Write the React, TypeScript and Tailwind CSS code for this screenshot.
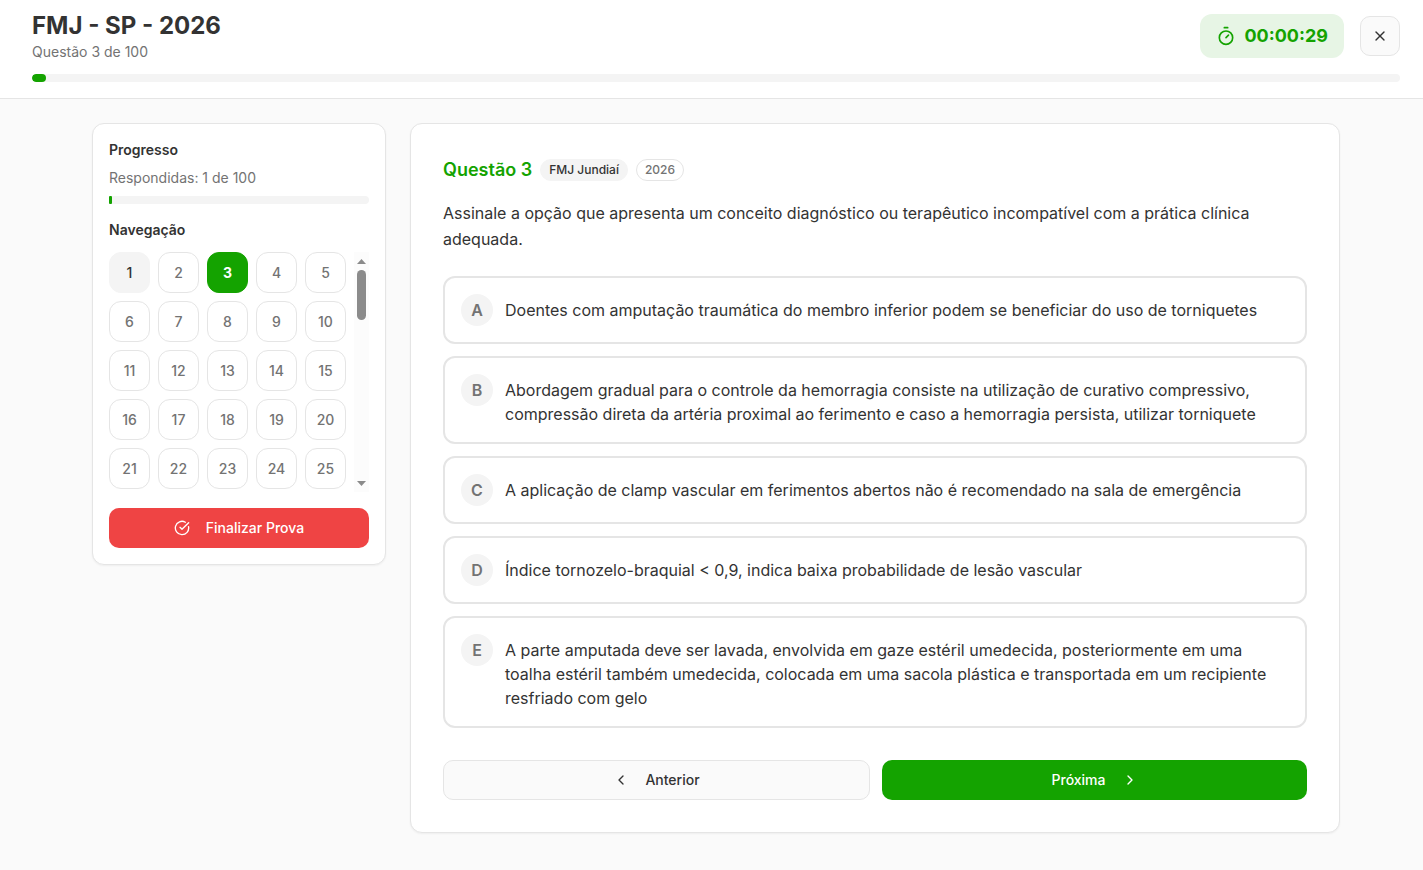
import { useState } from "react";
import { ChevronLeft, ChevronRight, CircleCheckBig, Timer, X } from "lucide-react";

const TOTAL = 100;
const CURRENT = 3;
const ANSWERED = [1];

const PER_ROW = 5;
const VISIBLE_ROWS = 5;
const LAST_ROW = TOTAL / PER_ROW - VISIBLE_ROWS;
const THUMB_TRAVEL = 155;

const options = [
  {
    letter: "A",
    text: "Doentes com amputação traumática do membro inferior podem se beneficiar do uso de torniquetes",
  },
  {
    letter: "B",
    text: "Abordagem gradual para o controle da hemorragia consiste na utilização de curativo compressivo, compressão direta da artéria proximal ao ferimento e caso a hemorragia persista, utilizar torniquete",
  },
  {
    letter: "C",
    text: "A aplicação de clamp vascular em ferimentos abertos não é recomendado na sala de emergência",
  },
  {
    letter: "D",
    text: "Índice tornozelo-braquial < 0,9, indica baixa probabilidade de lesão vascular",
  },
  {
    letter: "E",
    text: "A parte amputada deve ser lavada, envolvida em gaze estéril umedecida, posteriormente em uma toalha estéril também umedecida, colocada em uma sacola plástica e transportada em um recipiente resfriado com gelo",
  },
];

function navClass(n: number) {
  if (n === CURRENT) return "border-[#14a300] bg-[#14a300] text-white font-bold";
  if (ANSWERED.includes(n)) return "border-[#f4f4f4] bg-[#f4f4f4] text-[#333333] font-medium";
  return "border-[#e5e5e5] bg-white text-[#737373] font-medium";
}

function Header() {
  return (
    <header className="border-b border-[#e5e5e5] bg-white px-8 pt-[10px] pb-4">
      <div className="flex items-center justify-between">
        <div>
          <h1 className="text-2xl font-bold">FMJ - SP - 2026</h1>
          <p className="text-sm text-[#737373]">
            Questão {CURRENT} de {TOTAL}
          </p>
        </div>

        <div className="flex items-center gap-4">
          <div className="flex items-center gap-2 rounded-xl bg-[#e7f5e5] px-4 py-2 text-[#14a300]">
            <Timer className="h-5 w-5" />
            <span className="text-lg font-bold">00:00:29</span>
          </div>
          <button
            aria-label="Fechar"
            className="flex h-10 w-10 items-center justify-center rounded-[10px] border border-[#e5e5e5] bg-[#fafafa]"
          >
            <X className="h-4 w-4" />
          </button>
        </div>
      </div>

      <div className="mt-3 h-2 overflow-hidden rounded-full bg-[#f4f4f4]">
        <div className="h-full w-[1%] min-w-[14px] rounded-full bg-[#14a300]" />
      </div>
    </header>
  );
}

function Sidebar() {
  const [row, setRow] = useState(0);
  const first = row * PER_ROW + 1;

  return (
    <aside className="self-start rounded-xl border border-[#e5e5e5] bg-white p-4 shadow-xs">
      <h2 className="text-sm font-semibold">Progresso</h2>
      <p className="mt-2 text-sm text-[#737373]">
        Respondidas: {ANSWERED.length} de {TOTAL}
      </p>
      <div className="mt-2 h-2 rounded-full bg-[#f4f4f4]">
        <div
          className="h-full rounded-[1px] bg-[#14a300]"
          style={{ width: `${(ANSWERED.length / TOTAL) * 100}%` }}
        />
      </div>

      <h2 className="mt-4 text-sm font-semibold">Navegação</h2>
      <div className="mt-3 flex min-h-60 gap-2">
        <div className="grid flex-1 auto-rows-max grid-cols-5 gap-2">
          {Array.from({ length: PER_ROW * VISIBLE_ROWS }, (_, i) => first + i).map((n) => (
            <button
              key={n}
              className={`flex aspect-square items-center justify-center rounded-xl border text-sm ${navClass(n)}`}
            >
              {n}
            </button>
          ))}
        </div>
        {/* scroll track */}
        <div className="flex w-[15px] flex-col items-center bg-[#fcfcfc]">
          <button
            aria-label="Subir"
            className="flex h-[18px] w-full items-center justify-center"
            onClick={() => setRow(Math.max(0, row - 1))}
          >
            <svg width="9" height="5" viewBox="0 0 9 5" fill="#8b8b8b">
              <path d="M4.5 0 9 5H0Z" />
            </svg>
          </button>
          <div
            className="h-[50px] w-[9px] rounded-full bg-[#8b8b8b]"
            style={{ marginTop: Math.round((row / LAST_ROW) * THUMB_TRAVEL) }}
          />
          <button
            aria-label="Descer"
            className="mt-auto flex h-[18px] w-full items-center justify-center"
            onClick={() => setRow(Math.min(LAST_ROW, row + 1))}
          >
            <svg width="9" height="5" viewBox="0 0 9 5" fill="#8b8b8b">
              <path d="M0 0h9L4.5 5Z" />
            </svg>
          </button>
        </div>
      </div>

      <button className="mt-4 flex h-10 w-full items-center justify-center gap-4 rounded-[10px] bg-[#ef4444] text-sm font-medium text-white">
        <CircleCheckBig className="h-4 w-4" />
        Finalizar Prova
      </button>
    </aside>
  );
}

function Question() {
  const [selected, setSelected] = useState("");

  return (
    <section className="rounded-xl border border-[#e5e5e5] bg-white p-8 shadow-xs lg:col-span-3">
      <div className="flex items-center gap-2">
        <h2 className="text-lg font-semibold text-[#14a300]">Questão {CURRENT}</h2>
        <span className="rounded-full border border-[#f4f4f4] bg-[#f4f4f4] px-2 py-[2px] text-xs font-medium">
          FMJ Jundiaí
        </span>
        <span className="rounded-full border border-[#e5e5e5] px-2 py-[2px] text-xs font-medium text-[#737373]">
          2026
        </span>
      </div>

      <p className="mt-4 text-base leading-[26px]">
        Assinale a opção que apresenta um conceito diagnóstico ou terapêutico incompatível com a prática
        clínica adequada.
      </p>

      <div className="mt-6 flex flex-col gap-3">
        {options.map((option) => (
          <label
            key={option.letter}
            className="flex cursor-pointer items-start gap-3 rounded-xl border-2 border-[#e5e5e5] p-4 has-checked:border-[#14a300]"
          >
            <input
              type="radio"
              name="answer"
              className="sr-only"
              checked={selected === option.letter}
              onChange={() => setSelected(option.letter)}
            />
            <span className="flex h-8 w-8 shrink-0 items-center justify-center rounded-full bg-[#f4f4f4] font-semibold text-[#737373]">
              {option.letter}
            </span>
            <span className="flex-1 pt-1">{option.text}</span>
          </label>
        ))}
      </div>

      <div className="mt-8 flex gap-3">
        <button className="flex h-10 flex-1 items-center justify-center gap-4 rounded-[10px] border border-[#e5e5e5] bg-[#fafafa] text-sm font-medium">
          <ChevronLeft className="h-4 w-4" />
          Anterior
        </button>
        <button className="flex h-10 flex-1 items-center justify-center gap-4 rounded-[10px] bg-[#14a300] text-sm font-medium text-white">
          Próxima
          <ChevronRight className="h-4 w-4" />
        </button>
      </div>
    </section>
  );
}

export default function App() {
  return (
    <div className="min-h-screen overflow-hidden bg-[#fafafa] font-['Inter',sans-serif] text-[#333333]">
      <div className="-mr-[9px]">
        <Header />
        <main className="mx-auto grid max-w-7xl grid-cols-1 gap-6 px-4 py-6 lg:grid-cols-4">
          <Sidebar />
          <Question />
        </main>
      </div>
    </div>
  );
}
